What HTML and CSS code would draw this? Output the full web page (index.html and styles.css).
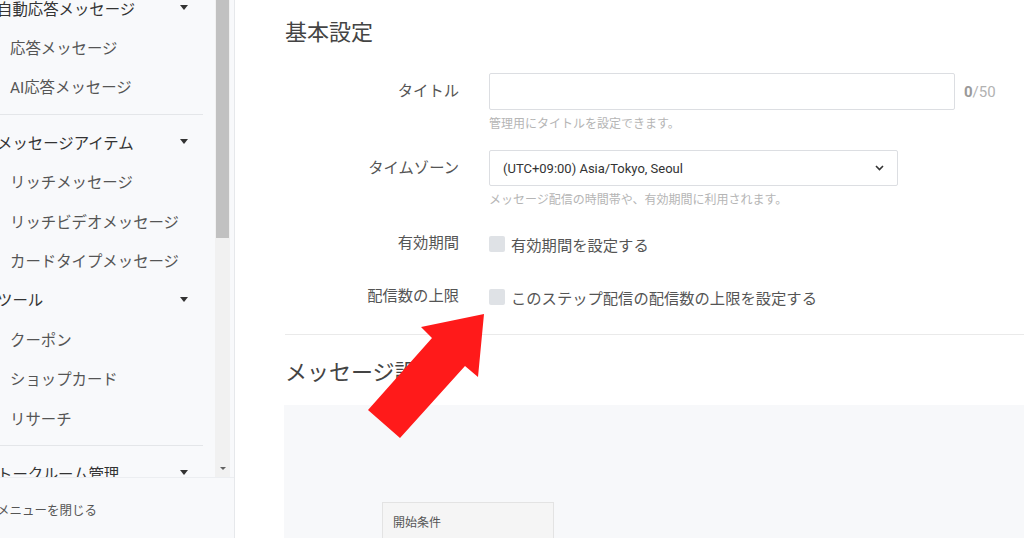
FILE: index.html
```html
<!DOCTYPE html>
<html lang="ja">

<head>
    <meta charset="UTF-8">
    <meta name="viewport" content="width=device-width, initial-scale=1.0">
    <title>ステップ配信</title>
    <link rel="stylesheet" href="styles.css">
</head>

<body>
    <div class="layout">
        <aside class="sidebar">
            <div class="menu-area">
                <div class="menu">
                    <div class="menu-group">
                        <div class="menu-head">自動応答メッセージ<i class="caret"></i></div>
                        <div class="menu-item">応答メッセージ</div>
                        <div class="menu-item">AI応答メッセージ</div>
                    </div>
                    <div class="menu-divider"></div>
                    <div class="menu-group">
                        <div class="menu-head">メッセージアイテム<i class="caret"></i></div>
                        <div class="menu-item">リッチメッセージ</div>
                        <div class="menu-item">リッチビデオメッセージ</div>
                        <div class="menu-item">カードタイプメッセージ</div>
                    </div>
                    <div class="menu-group">
                        <div class="menu-head">ツール<i class="caret"></i></div>
                        <div class="menu-item">クーポン</div>
                        <div class="menu-item">ショップカード</div>
                        <div class="menu-item">リサーチ</div>
                    </div>
                    <div class="menu-divider"></div>
                    <div class="menu-group">
                        <div class="menu-head">トークルーム管理<i class="caret"></i></div>
                    </div>
                </div>
                <!-- スクロールバー -->
                <div class="scrollbar">
                    <div class="scroll-thumb"></div>
                    <div class="scroll-down"></div>
                </div>
            </div>
            <div class="menu-footer">メニューを閉じる</div>
        </aside>

        <main class="content">
            <section class="basic">
                <h2 class="section-title">基本設定</h2>

                <div class="form-row">
                    <div class="form-label">タイトル</div>
                    <div class="form-field">
                        <div class="input-line">
                            <input type="text" class="text-input">
                            <span class="counter"><b>0</b>/50</span>
                        </div>
                        <p class="help">管理用にタイトルを設定できます。</p>
                    </div>
                </div>

                <div class="form-row">
                    <div class="form-label">タイムゾーン</div>
                    <div class="form-field">
                        <div class="select">
                            <span>(UTC+09:00) Asia/Tokyo, Seoul</span>
                            <svg class="chevron" width="9" height="6" viewBox="0 0 9 6">
                                <polyline points="1,1 4.5,4.5 8,1" fill="none" stroke="#333" stroke-width="1.6" />
                            </svg>
                        </div>
                        <p class="help">メッセージ配信の時間帯や、有効期間に利用されます。</p>
                    </div>
                </div>

                <div class="form-row check-row">
                    <div class="form-label">有効期間</div>
                    <label class="check"><span class="box"></span>有効期間を設定する</label>
                </div>

                <div class="form-row check-row">
                    <div class="form-label">配信数の上限</div>
                    <label class="check"><span class="box"></span>このステップ配信の配信数の上限を設定する</label>
                </div>
            </section>

            <section class="message">
                <h2 class="section-title">メッセージ設定</h2>
                <div class="flow-panel">
                    <div class="flow-box">開始条件</div>
                </div>
            </section>
        </main>

        <!-- 赤い矢印 -->
        <svg class="pointer-arrow" width="1024" height="538" viewBox="0 0 1024 538">
            <polygon points="484,314 478,377 465,366 400,438 368,410 432,338 421,327" fill="#ff1a1a" />
        </svg>
    </div>
</body>

</html>
```

FILE: styles.css
```css
* {
    margin: 0;
    padding: 0;
    box-sizing: border-box;
}

body {
    font-family: "Roboto", "Noto Sans CJK JP", sans-serif;
    color: #555;
    background: #fff;
    overflow: hidden;
}

.layout {
    position: relative;
    display: flex;
    height: 538px;
    width: 1024px;
    overflow: hidden;
}

/* sidebar */
.sidebar {
    width: 235px;
    flex-shrink: 0;
    display: flex;
    flex-direction: column;
    background: #f8f9fb;
    border-right: 1px solid #e6e8eb;
}

.menu-area {
    height: 478px;
    display: flex;
    padding-right: 4px;
    border-bottom: 1px solid #eceef1;
}

.menu {
    flex: 1;
    margin-left: -3px;
    overflow: hidden;
}

.menu-group {
    display: flex;
    flex-direction: column;
}

.menu-group:first-child {
    margin-top: -12px;
}

.menu-head,
.menu-item {
    height: 39.4px;
    display: flex;
    align-items: center;
    font-size: 15.4px;
    white-space: nowrap;
}

.menu-head {
    justify-content: space-between;
    padding-right: 27px;
    color: #333;
}

.menu-item {
    padding-left: 13px;
    color: #555;
}

.caret {
    width: 0;
    height: 0;
    border-left: 4.5px solid transparent;
    border-right: 4.5px solid transparent;
    border-top: 5px solid #333;
}

.menu-divider {
    height: 1px;
    background: #e4e6e9;
    margin: 8px 12px 7px 3px;
}

.scrollbar {
    width: 15px;
    flex-shrink: 0;
    display: flex;
    flex-direction: column;
    justify-content: space-between;
    align-items: center;
    background: #f1f1f1;
}

.scroll-thumb {
    width: 13px;
    height: 238px;
    background: #c1c1c1;
}

.scroll-down {
    width: 0;
    height: 0;
    margin-bottom: 7px;
    border-left: 3px solid transparent;
    border-right: 3px solid transparent;
    border-top: 3px solid #606060;
}

.menu-footer {
    flex: 1;
    display: flex;
    align-items: center;
    margin-left: -3px;
    padding-top: 3px;
    font-size: 12.5px;
    color: #555;
}

/* content */
.content {
    flex: 1;
    padding-left: 50px;
}

.section-title {
    font-size: 22px;
    font-weight: normal;
    line-height: 30px;
    color: #444;
    white-space: nowrap;
}

.basic {
    padding-top: 18px;
    padding-bottom: 20px;
    border-bottom: 1px solid #eaeaea;
}

.basic .section-title {
    margin-bottom: 25px;
}

.form-row {
    display: flex;
    margin-bottom: 18px;
}

.form-row:last-child {
    margin-bottom: 0;
}

.form-label {
    width: 174px;
    margin-right: 30px;
    height: 37px;
    line-height: 37px;
    text-align: right;
    font-size: 15.3px;
    color: #555;
    white-space: nowrap;
}

.form-field {
    flex: 1;
}

.input-line {
    display: flex;
    align-items: center;
}

.text-input {
    width: 466px;
    height: 37px;
    border: 1px solid #dcdee2;
    border-radius: 2px;
    outline: none;
}

.counter {
    margin-left: 9px;
    font-size: 15px;
    color: #b2b2b2;
}

.counter b {
    color: #999;
}

.help {
    margin-top: 6px;
    font-size: 12px;
    line-height: 16px;
    color: #b5b5b5;
    white-space: nowrap;
}

.select {
    width: 409px;
    height: 36px;
    display: flex;
    align-items: center;
    justify-content: space-between;
    padding: 0 13px 0 13px;
    border: 1px solid #dcdee2;
    border-radius: 2px;
    font-size: 13px;
    color: #333;
}

.check-row .form-label {
    height: 35px;
    line-height: 35px;
}

.check {
    display: flex;
    align-items: center;
    font-size: 15.3px;
    color: #555;
    white-space: nowrap;
}

.check .box {
    width: 16px;
    height: 16px;
    margin-right: 6px;
    border-radius: 2px;
    background: #dfe2e6;
}

.message {
    padding-top: 23px;
}

.message .section-title {
    margin-bottom: 17px;
}

.flow-panel {
    margin-left: -1px;
    height: 140px;
    padding: 97px 0 0 98px;
    background: #f7f8fa;
}

.flow-box {
    width: 172px;
    height: 60px;
    padding: 10px 10px 0;
    border: 1px solid #e3e3e3;
    background: #f5f5f5;
    font-size: 12px;
    color: #555;
}

.pointer-arrow {
    position: absolute;
    left: 0;
    top: 0;
    pointer-events: none;
}
```
